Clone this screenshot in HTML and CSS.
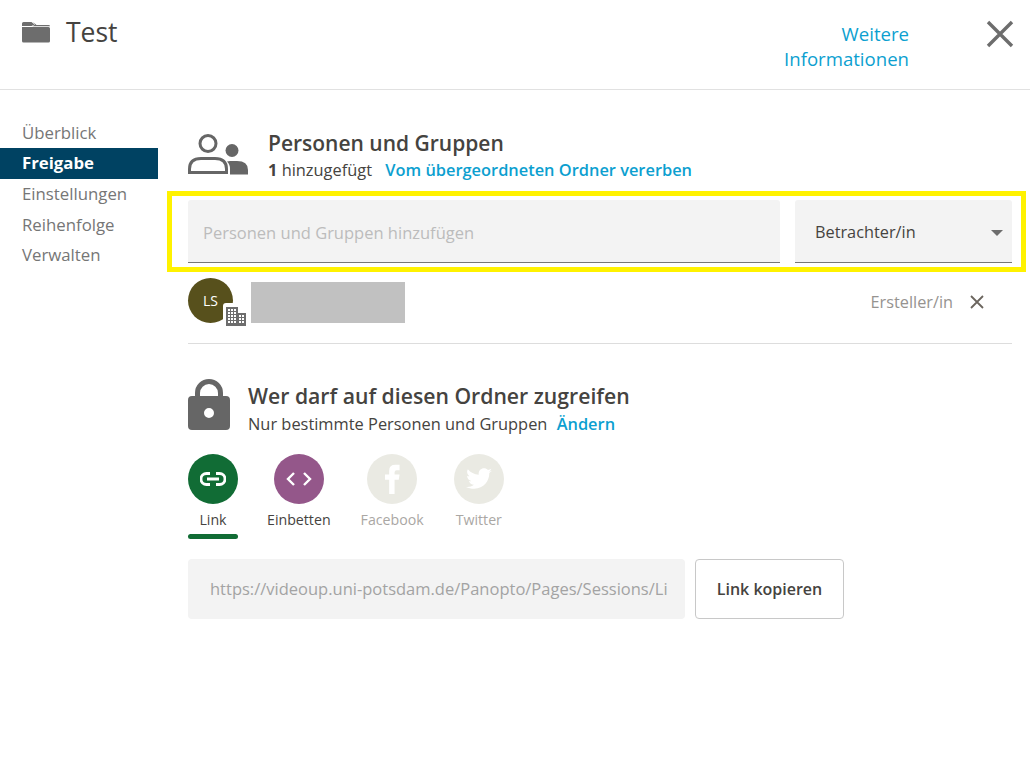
FILE: index.html
```html
<!DOCTYPE html>
<html lang="de">
<head>
    <meta charset="UTF-8">
    <title>Test</title>
    <link rel="stylesheet" href="styles.css">
</head>
<body>
    <div class="header">
        <svg class="folder-icon" width="28" height="22" viewBox="0 0 28 22">
            <path fill="#6d6d6d" d="M0 2.500Q0 1 1.500 1H9.500L12.500 3.500L9.500 5H0ZM0 6H26.500Q28 6 28 7.500V20Q28 21.500 26.500 21.500H1.500Q0 21.500 0 20ZM11 1L14.500 4H26.500Q28 4 28 5.200H10.500L13 3.500Z"/>
        </svg>
        <h1 class="title">Test</h1>
        <a class="more-info">Weitere<br>Informationen</a>
        <svg class="close-icon" width="28" height="28" viewBox="0 0 28 28">
            <path stroke="#6d6d6d" stroke-width="3.400" d="M2 2L26 26M26 2L2 26"/>
        </svg>
    </div>

    <div class="layout">
        <ul class="sidebar">
            <li>Überblick</li>
            <li class="selected">Freigabe</li>
            <li>Einstellungen</li>
            <li>Reihenfolge</li>
            <li>Verwalten</li>
        </ul>

        <div class="content">
            <div class="section-head people-head">
                <svg class="people-icon" width="60" height="42" viewBox="0 0 60 42">
                    <circle cx="20" cy="9.500" r="8" fill="none" stroke="#666" stroke-width="3"/>
                    <path fill="none" stroke="#666" stroke-width="3" d="M1.500 38.500V35Q1.500 24.500 13 24.500H27Q38.500 24.500 38.500 35V38.500Z"/>
                    <circle cx="44" cy="16.500" r="6.500" fill="#666"/>
                    <path fill="#666" d="M42 27H49Q60 27 60 36V40.500H42V35Q42 30 39 27.500Z"/>
                </svg>
                <div>
                    <h2>Personen und Gruppen</h2>
                    <p><b>1</b> hinzugefügt <a class="link-text">Vom übergeordneten Ordner vererben</a></p>
                </div>
            </div>

            <div class="add-row">
                <div class="field add-input">Personen und Gruppen hinzufügen</div>
                <div class="field role-select">Betrachter/in<span class="caret"></span></div>
            </div>

            <div class="person-row">
                <div class="avatar">LS
                    <span class="avatar-badge">
                        <svg width="20" height="20" viewBox="0 0 20 20">
                            <path fill="#6d6d6d" fill-rule="evenodd" d="M0 1H12V7H20V20H0ZM2 3V5H4V3ZM5 3V5H7V3ZM8 3V5H10V3ZM2 6V8H4V6ZM5 6V8H7V6ZM8 6V8H10V6ZM2 9V11H4V9ZM5 9V11H7V9ZM8 9V11H10V9ZM13 9V11H15V9ZM16 9V11H18V9ZM2 12V14H4V12ZM5 12V14H7V12ZM8 12V14H10V12ZM13 12V14H15V12ZM16 12V14H18V12ZM2 15V17H4V15ZM5 15V17H7V15ZM8 15V17H10V15ZM13 15V17H15V15ZM16 15V17H18V15Z"/>
                        </svg>
                    </span>
                </div>
                <div class="name-hidden"></div>
                <span class="person-role">Ersteller/in</span>
                <svg class="remove-icon" width="14" height="14" viewBox="0 0 14 14">
                    <path stroke="#6b655e" stroke-width="1.800" d="M1 1L13 13M13 1L1 13"/>
                </svg>
            </div>

            <div class="section-head access-head">
                <svg class="lock-icon" width="42" height="51" viewBox="0 0 42 51">
                    <path fill="none" stroke="#666" stroke-width="5" d="M9.500 20V14A11.500 11.500 0 0 1 32.500 14V20"/>
                    <path fill="#666" fill-rule="evenodd" d="M4 17H38Q42 17 42 21V47Q42 51 38 51H4Q0 51 0 47V21Q0 17 4 17ZM21 29A5 5 0 1 0 21 39A5 5 0 1 0 21 29Z"/>
                </svg>
                <div>
                    <h2>Wer darf auf diesen Ordner zugreifen</h2>
                    <p>Nur bestimmte Personen und Gruppen <a class="link-text">Ändern</a></p>
                </div>
            </div>

            <div class="share-tabs">
                <div class="share-tab active">
                    <span class="share-circle green">
                        <svg width="26" height="14" viewBox="0 0 26 14">
                            <path fill="none" stroke="#fff" stroke-width="2.800" d="M10 1.500H6.500a5.500 5.500 0 0 0 0 11H10M16 1.500H19.500a5.500 5.500 0 0 1 0 11H16M7 7H19"/>
                        </svg>
                    </span>
                    <span class="share-label">Link</span>
                </div>
                <div class="share-tab">
                    <span class="share-circle purple">
                        <svg width="26" height="14" viewBox="0 0 26 14">
                            <path fill="none" stroke="#fff" stroke-width="2.400" d="M8 1L2 7L8 13M18 1L24 7L18 13"/>
                        </svg>
                    </span>
                    <span class="share-label">Einbetten</span>
                </div>
                <div class="share-tab off">
                    <span class="share-circle grey">
                        <svg width="15" height="30" viewBox="0 0 18 36">
                            <path fill="#fff" d="M5 36V19H0V12.500H5V8Q5 1 12.500 1H17.500V7.500H14Q11.500 7.500 11.500 10V12.500H17.500L16.500 19H11.500V36Z"/>
                        </svg>
                    </span>
                    <span class="share-label">Facebook</span>
                </div>
                <div class="share-tab off">
                    <span class="share-circle grey">
                        <svg width="26" height="22" viewBox="0 0 24 20">
                            <path fill="#fff" d="M24 2.400c-.9.400-1.800.7-2.800.8 1-.6 1.800-1.600 2.200-2.700-1 .6-2 1-3.100 1.200C19.300.6 18 0 16.600 0c-2.700 0-4.900 2.200-4.900 4.900 0 .4 0 .8.100 1.100C7.700 5.800 4.100 3.800 1.700.9c-.4.700-.7 1.600-.7 2.500 0 1.700.9 3.200 2.200 4.100-.8 0-1.600-.2-2.200-.6v.1c0 2.400 1.700 4.400 3.900 4.800-.4.100-.8.200-1.300.2-.3 0-.6 0-.9-.1.600 2 2.400 3.400 4.600 3.400-1.700 1.300-3.800 2.100-6.100 2.100-.4 0-.8 0-1.200-.1C2.200 18.200 4.800 19 7.500 19c9.100 0 14-7.500 14-14v-.6c1-.7 1.800-1.500 2.500-2z"/>
                        </svg>
                    </span>
                    <span class="share-label">Twitter</span>
                </div>
            </div>

            <div class="copy-row">
                <div class="url-box">https://videoup.uni-potsdam.de/Panopto/Pages/Sessions/Li</div>
                <button class="copy-btn">Link kopieren</button>
            </div>
        </div>
    </div>
</body>
</html>
```

FILE: styles.css
```css
* {
    box-sizing: border-box;
}

body {
    margin: 0;
    height: 758px;
    overflow: hidden;
    font-family: "Open Sans", "Noto Sans", Arial, sans-serif;
    color: #454340;
    background-color: #fff;
}

a {
    color: #0c9fd0;
}

.header {
    display: flex;
    align-items: flex-start;
    height: 90px;
    padding: 21px 16px 0 22px;
    border-bottom: 1px solid #e1e1e1;
}

.title {
    flex-grow: 1;
    margin: -7px 0 0 16px;
    font-size: 26.500px;
    line-height: 36px;
    font-weight: 400;
}

.more-info {
    margin-top: 1px;
    font-size: 18.600px;
    line-height: 24.500px;
    text-align: right;
}

.close-icon {
    margin: -1px 0 0 77px;
}

.layout {
    display: flex;
}

.sidebar {
    width: 158px;
    margin: 0;
    padding: 27.500px 0 0;
    list-style: none;
    font-size: 16.800px;
    color: #767676;
}

.sidebar li {
    height: 30.700px;
    padding-left: 22px;
    line-height: 30px;
}

.sidebar li.selected {
    background-color: #004262;
    color: #fff;
    font-weight: 700;
}

.content {
    width: 824px;
    margin-left: 30px;
}

.section-head {
    display: flex;
}

.section-head h2 {
    margin: 0;
    font-size: 21px;
    line-height: 28px;
    font-weight: 600;
}

.section-head p {
    margin: 0;
    font-size: 16.400px;
    line-height: 25px;
}

.link-text {
    margin-left: 5px;
    font-weight: 600;
}

.people-head {
    height: 101px;
    padding-top: 39px;
}

.people-head .link-text {
    margin-left: 9px;
}

.people-icon {
    margin: 5px 20px 0 0;
}

.add-row {
    display: flex;
    gap: 15px;
    height: 81px;
    margin: 0 -14px 0 -21px;
    padding: 4px 9px 4px 16px;
    border: 5px solid #fff200;
}

.field {
    display: flex;
    align-items: center;
    height: 63px;
    padding-top: 2px;
    background-color: #f3f3f3;
    border-bottom: 1px solid #777;
    border-radius: 3px 3px 0 0;
    font-size: 16.500px;
}

.add-input {
    width: 592px;
    padding-left: 15px;
    color: #bcbcbc;
}

.role-select {
    position: relative;
    width: 217px;
    padding-left: 20px;
    font-size: 16.300px;
}

.caret {
    position: absolute;
    right: 9px;
    top: 30px;
    border-left: 6px solid transparent;
    border-right: 6px solid transparent;
    border-top: 6px solid #6d6d6d;
}

.person-row {
    display: flex;
    align-items: center;
    height: 72px;
    border-bottom: 1px solid #ddd;
}

.avatar {
    position: relative;
    display: flex;
    align-items: center;
    justify-content: center;
    width: 45px;
    height: 45px;
    margin: 0 18px 14px 0;
    border-radius: 50%;
    background-color: #57501c;
    color: #fff;
    font-size: 14px;
}

.avatar-badge {
    position: absolute;
    left: 35px;
    top: 25px;
    display: flex;
    width: 23px;
    height: 22px;
    padding: 3px 0 0 3px;
    background-color: #fff;
    border-radius: 3px;
}

.name-hidden {
    width: 154px;
    height: 41px;
    margin-bottom: 10px;
    background-color: #c1c1c1;
}

.person-role {
    margin: 0 17px 12px auto;
    font-size: 16.300px;
    color: #969390;
}

.remove-icon {
    margin: 0 28px 12px 0;
}

.access-head {
    height: 110px;
    padding-top: 35px;
}

.lock-icon {
    margin-right: 18px;
}

.access-head h2 {
    margin-top: 3px;
    font-size: 21.200px;
}

.access-head p {
    margin-top: 1px;
}

.share-tabs {
    display: flex;
    gap: 30px;
    height: 88px;
}

.share-tab {
    position: relative;
    display: flex;
    flex-direction: column;
    align-items: center;
    min-width: 50px;
}

.share-tab.active {
    margin-right: -1px;
}

.share-tab.active::after {
    content: "";
    position: absolute;
    left: 0;
    top: 80px;
    width: 50px;
    height: 5px;
    border-radius: 3px;
    background-color: #116c35;
}

.share-circle {
    display: flex;
    align-items: center;
    justify-content: center;
    width: 50px;
    height: 50px;
    border-radius: 50%;
}

.green {
    background-color: #116c35;
}

.purple {
    background-color: #94578a;
}

.grey {
    background-color: #eaeae3;
    overflow: hidden;
}

.share-label {
    margin-top: 6px;
    font-size: 14.200px;
    line-height: 20px;
    white-space: nowrap;
}

.off .share-label {
    color: #aaa7a4;
}

.copy-row {
    display: flex;
    gap: 10px;
    margin-top: 17px;
}

.url-box {
    width: 497px;
    height: 60px;
    padding: 18px 0 0 22px;
    background-color: #f3f3f3;
    border-radius: 4px;
    font-size: 16.500px;
    line-height: 24px;
    color: #a3a3a3;
    white-space: nowrap;
}

.copy-btn {
    width: 149px;
    height: 60px;
    padding: 0;
    background-color: #fff;
    border: 1px solid #c8c8c8;
    border-radius: 4px;
    font-family: inherit;
    font-size: 16px;
    font-weight: 600;
    color: #454340;
}
```
